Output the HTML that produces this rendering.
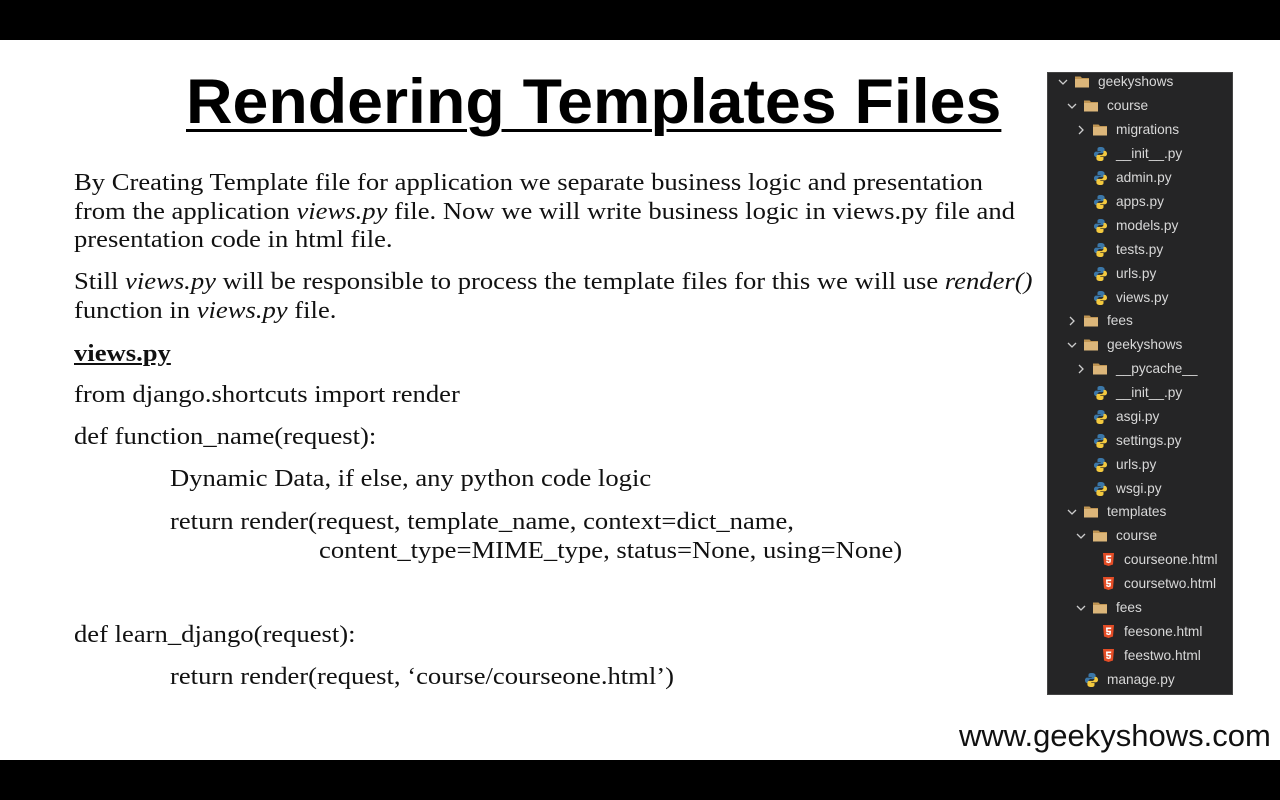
<!DOCTYPE html>
<html><head><meta charset="utf-8"><style>
*{margin:0;padding:0;box-sizing:border-box}
body{width:1280px;height:800px;background:#fff;position:relative;overflow:hidden;font-family:"Liberation Serif",serif;color:#111}
.bar{position:absolute;left:0;width:1280px;background:#000}
.t{position:absolute;font-size:24px;line-height:28px;white-space:nowrap;transform:scaleX(1.109);transform-origin:0 0}
h1{position:absolute;left:186px;top:64px;font-family:"Liberation Sans",sans-serif;font-weight:bold;font-size:63px;line-height:76px;text-decoration:underline;text-decoration-thickness:3px;text-underline-offset:6px;color:#000;white-space:nowrap;transform:scaleX(1.023);transform-origin:0 0}
.tree{position:absolute;left:1047px;top:72px;width:186px;height:623px;background:#252526;border:1px solid #444;font-family:"Liberation Sans",sans-serif;font-size:13.7px;color:#d8d8d8}
.r{position:absolute;height:24px;line-height:24px;white-space:nowrap}
.ch{position:absolute;top:0;width:10px;height:24px}
.ic{position:absolute;top:5px}
</style></head><body>
<div class="bar" style="top:0;height:40px"></div>
<div class="bar" style="top:760px;height:40px"></div>
<h1>Rendering Templates Files</h1>

<div class="t" style="left:74px;top:169px">By Creating Template file for application we separate business logic and presentation</div>
<div class="t" style="left:74px;top:198px">from the application <i>views.py</i> file. Now we will write business logic in views.py file and</div>
<div class="t" style="left:74px;top:226px">presentation code in html file.</div>
<div class="t" style="left:74px;top:268px">Still <i>views.py</i> will be responsible to process the template files for this we will use <i>render()</i></div>
<div class="t" style="left:74px;top:297px">function in <i>views.py</i> file.</div>
<div class="t" style="left:74px;top:340px;font-weight:bold;text-decoration:underline">views.py</div>
<div class="t" style="left:74px;top:381px">from django.shortcuts import render</div>
<div class="t" style="left:74px;top:423px">def function_name(request):</div>
<div class="t" style="left:170px;top:465px">Dynamic Data, if else, any python code logic</div>
<div class="t" style="left:170px;top:508px">return render(request, template_name, context=dict_name,</div>
<div class="t" style="left:319px;top:537px">content_type=MIME_type, status=None, using=None)</div>
<div class="t" style="left:74px;top:621px">def learn_django(request):</div>
<div class="t" style="left:170px;top:663px">return render(request, ‘course/courseone.html’)</div>

<div style="position:absolute;left:959px;top:718px;font-family:'Liberation Sans',sans-serif;font-size:31px;line-height:36px;color:#111">www.geekyshows.com</div>

<svg width="0" height="0" style="position:absolute">
<defs>
<g id="fold"><path d="M0 1.5h5.5l1.5 1.5H14v9.5H0z" fill="#c09553"/><path d="M0 4h14v8.5H0z" fill="#dcb67a"/></g>
<g id="py"><path d="M6.5 0C3.5 0 3.5 1.3 3.5 2.5V4h3.2v.6H2.3C1 4.6 0 5.6 0 7.2s1 2.9 2.3 2.9h1.2V8.4c0-1.3 1.1-2.3 2.3-2.3h3c1 0 1.8-.8 1.8-1.8V2.5C10.6 1 9.3 0 6.5 0z" fill="#3b77a8"/><path d="M6.5 14c3 0 3-1.3 3-2.5V10H6.3v-.6h4.4c1.3 0 2.3-1 2.3-2.6s-1-2.9-2.3-2.9H9.5v1.7c0 1.3-1.1 2.300-2.3 2.3h-3c-1 0-1.8.8-1.8 1.8v1.8C2.4 13 3.7 14 6.5 14z" fill="#f3c93f"/></g>
<g id="h5"><path d="M0 0h11l-1 11.5L5.5 13 1 11.5z" fill="#e44d26"/><path d="M3 2.5h5.3l-.2 1.6H4.6l.1 1.7h3.3l-.3 3.6-2.2.7-2.2-.7-.1-1.5h1.5l.1.6.7.2.8-.2.1-1.3H3.3z" fill="#fff"/></g>
<path id="cd" d="M1 3l4 4 4-4" stroke="#ccc" stroke-width="1.3" fill="none"/>
<path id="cr" d="M3 1l4 4-4 4" stroke="#ccc" stroke-width="1.3" fill="none"/>
</defs></svg>

<div class="tree">
<div class="r" style="top:-3px;left:0;width:186px">
 <svg class="ch" style="left:10px;top:7px" width="10" height="10"><use href="#cd"/></svg>
 <svg class="ic" style="left:27px;top:5px" width="15" height="13"><use href="#fold"/></svg>
 <span style="position:absolute;left:50px">geekyshows</span></div>
<div class="r" style="top:21px;left:0">
 <svg class="ch" style="left:19px;top:7px" width="10" height="10"><use href="#cd"/></svg>
 <svg class="ic" style="left:36px;top:5px" width="15" height="13"><use href="#fold"/></svg>
 <span style="position:absolute;left:59px">course</span></div>
<div class="r" style="top:45px;left:0">
 <svg class="ch" style="left:28px;top:7px" width="10" height="10"><use href="#cr"/></svg>
 <svg class="ic" style="left:45px;top:5px" width="15" height="13"><use href="#fold"/></svg>
 <span style="position:absolute;left:68px">migrations</span></div>
<div class="r" style="top:69px"><svg class="ic" style="left:46px" width="14" height="14"><use href="#py"/></svg><span style="position:absolute;left:68px">__init__.py</span></div>
<div class="r" style="top:93px"><svg class="ic" style="left:46px" width="14" height="14"><use href="#py"/></svg><span style="position:absolute;left:68px">admin.py</span></div>
<div class="r" style="top:117px"><svg class="ic" style="left:46px" width="14" height="14"><use href="#py"/></svg><span style="position:absolute;left:68px">apps.py</span></div>
<div class="r" style="top:141px"><svg class="ic" style="left:46px" width="14" height="14"><use href="#py"/></svg><span style="position:absolute;left:68px">models.py</span></div>
<div class="r" style="top:165px"><svg class="ic" style="left:46px" width="14" height="14"><use href="#py"/></svg><span style="position:absolute;left:68px">tests.py</span></div>
<div class="r" style="top:189px"><svg class="ic" style="left:46px" width="14" height="14"><use href="#py"/></svg><span style="position:absolute;left:68px">urls.py</span></div>
<div class="r" style="top:213px"><svg class="ic" style="left:46px" width="14" height="14"><use href="#py"/></svg><span style="position:absolute;left:68px">views.py</span></div>
<div class="r" style="top:236px">
 <svg class="ch" style="left:19px;top:7px" width="10" height="10"><use href="#cr"/></svg>
 <svg class="ic" style="left:36px;top:5px" width="15" height="13"><use href="#fold"/></svg>
 <span style="position:absolute;left:59px">fees</span></div>
<div class="r" style="top:260px">
 <svg class="ch" style="left:19px;top:7px" width="10" height="10"><use href="#cd"/></svg>
 <svg class="ic" style="left:36px;top:5px" width="15" height="13"><use href="#fold"/></svg>
 <span style="position:absolute;left:59px">geekyshows</span></div>
<div class="r" style="top:284px">
 <svg class="ch" style="left:28px;top:7px" width="10" height="10"><use href="#cr"/></svg>
 <svg class="ic" style="left:45px;top:5px" width="15" height="13"><use href="#fold"/></svg>
 <span style="position:absolute;left:68px">__pycache__</span></div>
<div class="r" style="top:308px"><svg class="ic" style="left:46px" width="14" height="14"><use href="#py"/></svg><span style="position:absolute;left:68px">__init__.py</span></div>
<div class="r" style="top:332px"><svg class="ic" style="left:46px" width="14" height="14"><use href="#py"/></svg><span style="position:absolute;left:68px">asgi.py</span></div>
<div class="r" style="top:356px"><svg class="ic" style="left:46px" width="14" height="14"><use href="#py"/></svg><span style="position:absolute;left:68px">settings.py</span></div>
<div class="r" style="top:380px"><svg class="ic" style="left:46px" width="14" height="14"><use href="#py"/></svg><span style="position:absolute;left:68px">urls.py</span></div>
<div class="r" style="top:404px"><svg class="ic" style="left:46px" width="14" height="14"><use href="#py"/></svg><span style="position:absolute;left:68px">wsgi.py</span></div>
<div class="r" style="top:427px">
 <svg class="ch" style="left:19px;top:7px" width="10" height="10"><use href="#cd"/></svg>
 <svg class="ic" style="left:36px;top:5px" width="15" height="13"><use href="#fold"/></svg>
 <span style="position:absolute;left:59px">templates</span></div>
<div class="r" style="top:451px">
 <svg class="ch" style="left:28px;top:7px" width="10" height="10"><use href="#cd"/></svg>
 <svg class="ic" style="left:45px;top:5px" width="15" height="13"><use href="#fold"/></svg>
 <span style="position:absolute;left:68px">course</span></div>
<div class="r" style="top:475px"><svg class="ic" style="left:55px" width="12" height="14"><use href="#h5"/></svg><span style="position:absolute;left:76px">courseone.html</span></div>
<div class="r" style="top:499px"><svg class="ic" style="left:55px" width="12" height="14"><use href="#h5"/></svg><span style="position:absolute;left:76px">coursetwo.html</span></div>
<div class="r" style="top:523px">
 <svg class="ch" style="left:28px;top:7px" width="10" height="10"><use href="#cd"/></svg>
 <svg class="ic" style="left:45px;top:5px" width="15" height="13"><use href="#fold"/></svg>
 <span style="position:absolute;left:68px">fees</span></div>
<div class="r" style="top:547px"><svg class="ic" style="left:55px" width="12" height="14"><use href="#h5"/></svg><span style="position:absolute;left:76px">feesone.html</span></div>
<div class="r" style="top:571px"><svg class="ic" style="left:55px" width="12" height="14"><use href="#h5"/></svg><span style="position:absolute;left:76px">feestwo.html</span></div>
<div class="r" style="top:595px"><svg class="ic" style="left:37px" width="14" height="14"><use href="#py"/></svg><span style="position:absolute;left:59px">manage.py</span></div>
</div>
</body></html>
